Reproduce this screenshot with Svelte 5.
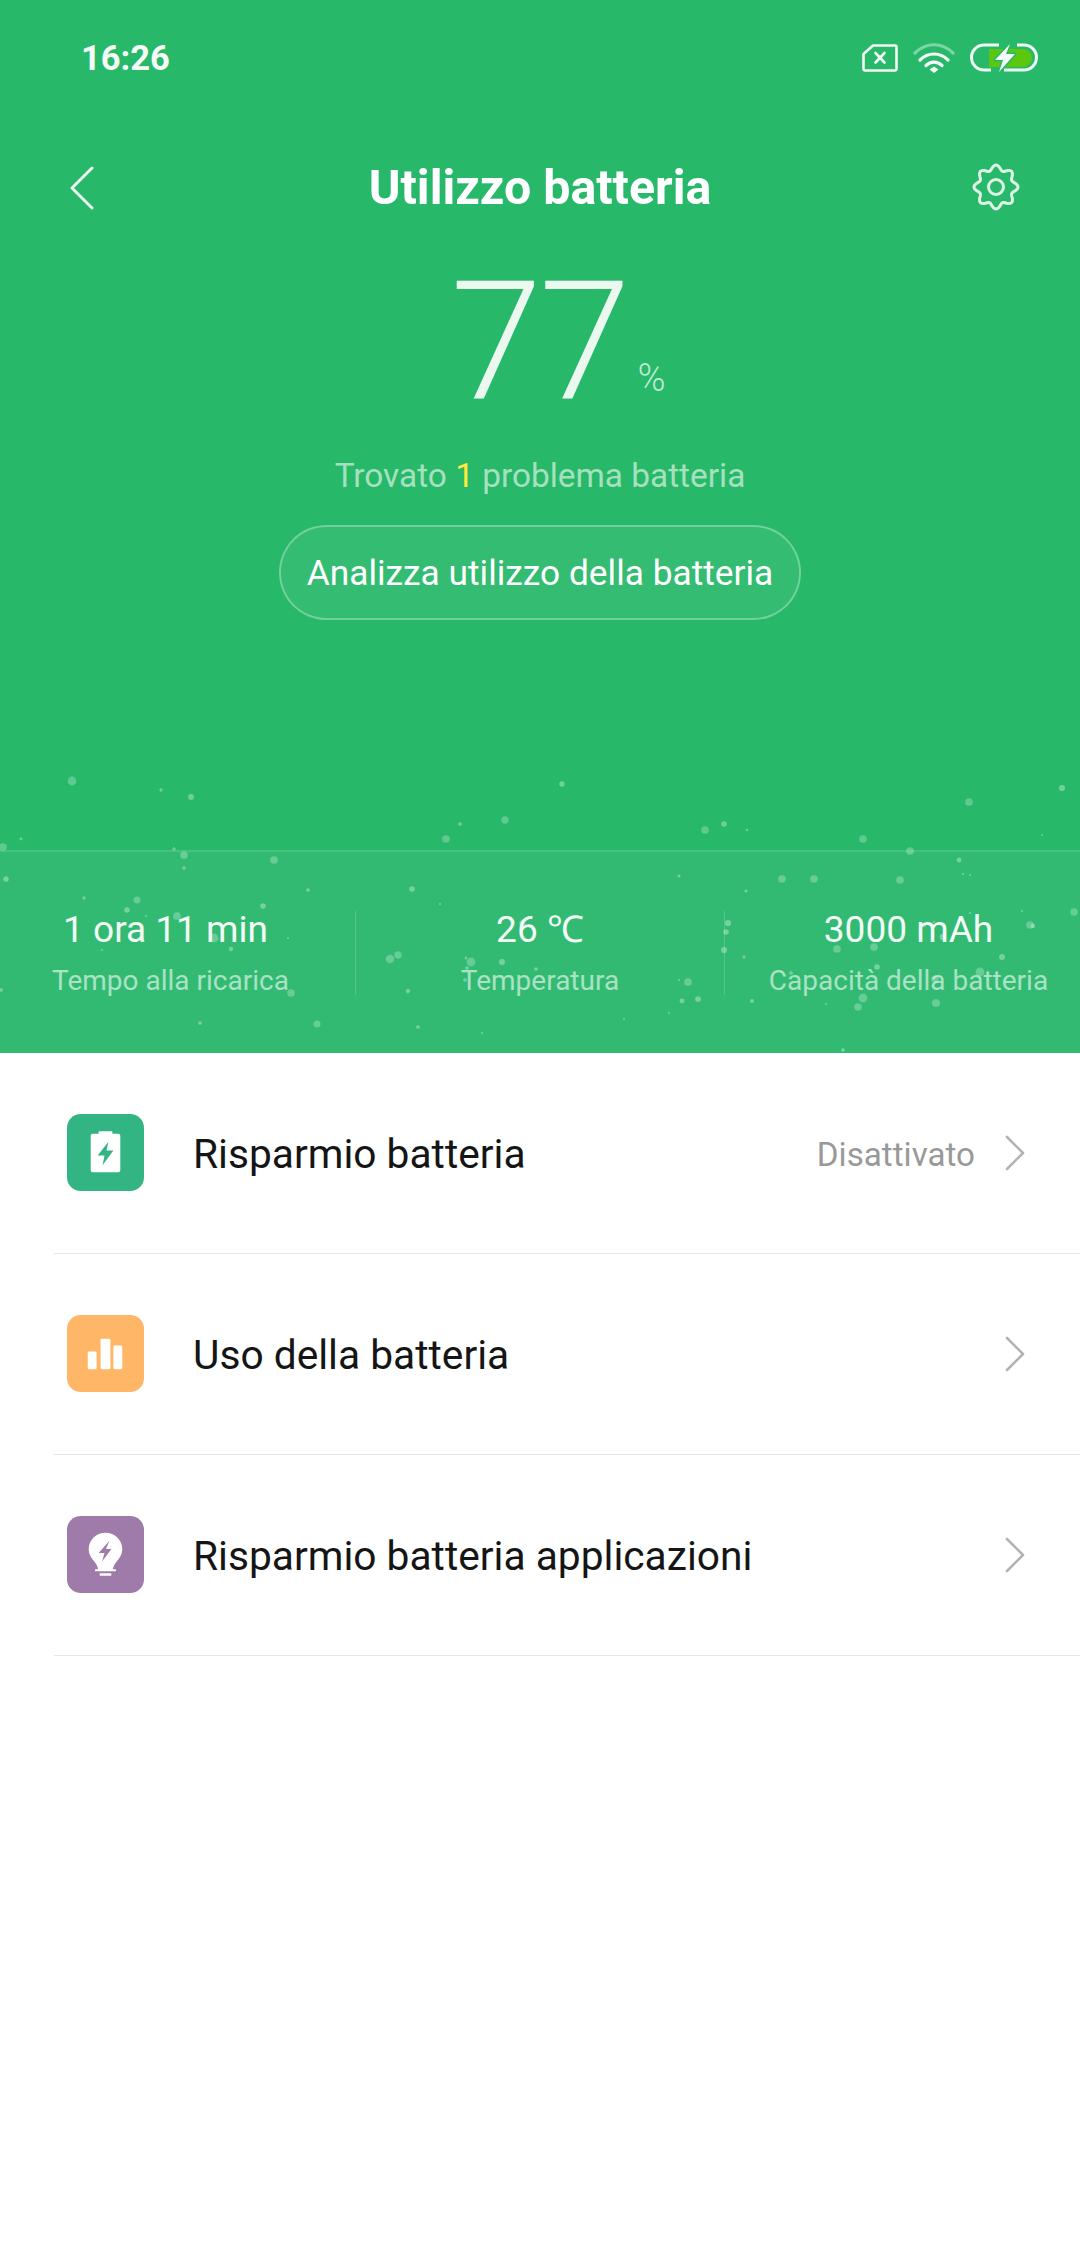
<script>
  // particles floating over the bottom of the green header: [x, y, r]
  const dots = [
    [72,781,4],[161,790,1.5],[191,797,2.7],[3,847,3.5],[21,839,1.3],[174,849,1.5],[184,855,3.5],[184,868,1.5],
    [274,860,3.5],[6,879,2.5],[84,898,1.5],[137,900,3.2],[127,910,2.5],[146,916,1],[177,916,3.5],[263,906,2.5],
    [308,890,1.7],[412,889,2.5],[440,904,1],[446,839,3.5],[460,824,1.7],[505,820,3.3],[214,938,4],[231,949,2],
    [288,938,1],[102,950,1],[390,959,3.8],[398,955,3.3],[471,962,4],[466,958,1.3],[502,962,2.7],[467,968,1.7],
    [536,969,1.7],[465,980,1.7],[1,990,1.7],[291,993,3.5],[408,991,2],[200,1023,1.7],[317,1024,3.2],[418,1027,1.7],
    [482,1033,1],[522,923,2.5],[562,784,2.5],[705,830,3.5],[724,824,2.5],[747,830,1.2],[863,839,3.5],[969,802,3.5],
    [1062,788,2.8],[1042,835,1],[910,851,3.5],[959,860,2.2],[963,874,1],[970,875,1],[679,876,1.4],[782,879,3.5],
    [814,879,3.5],[900,880,3.5],[746,891,1.4],[728,923,2.8],[726,932,2.5],[724,950,2.7],[744,957,1.4],[1074,912,3.4],
    [1030,925,3.5],[1033,926,2],[1022,911,1],[970,913,1],[934,922,1],[924,925,2],[943,937,3],[837,949,3.5],
    [874,947,3.5],[1002,957,2.7],[877,967,2.5],[980,972,4],[935,979,3.5],[791,973,1.7],[688,982,3.5],[679,980,1],
    [698,999,2.6],[682,1001,2.2],[752,1001,1.8],[863,998,4],[858,1007,3.4],[936,1003,3.7],[826,1004,1],[669,1013,1],
    [624,1019,1],[843,1050,1.7]
  ];

  const stats = [
    { value: "1 ora 11 min", label: "Tempo alla ricarica" },
    { value: "26 ℃", label: "Temperatura" },
    { value: "3000 mAh", label: "Capacità della batteria" }
  ];

  // wavy 8 lobe gear outline, centred on 24,24
  function gearPath() {
    const pts = [];
    for (let i = 0; i < 160; i++) {
      const a = (i / 160) * Math.PI * 2 - Math.PI / 2;
      const r = 19.5 + 2.5 * Math.cos(8 * (a + Math.PI / 2));
      pts.push((24 + r * Math.cos(a)).toFixed(2) + "," + (24 + r * Math.sin(a)).toFixed(2));
    }
    return "M" + pts.join("L") + "Z";
  }
</script>

<div class="page">
  <header class="hero">
    <div class="status">
      <span class="time">16:26</span>
      <div class="status-icons">
        <svg width="36" height="28" viewBox="0 0 36 28" fill="none" stroke="#f2fbf6" stroke-width="2.6" stroke-linejoin="round">
          <path d="M11 1.5H33a1.5 1.5 0 0 1 1.5 1.500V25a1.500 1.500 0 0 1-1.500 1.500H3A1.500 1.500 0 0 1 1.500 25V10Z" />
          <path d="M13.500 9l9 9.500M22.500 9l-9 9.500" stroke-linecap="round" />
        </svg>
        <svg width="42" height="30" viewBox="0 0 42 30" fill="none" stroke-linecap="round">
          <path d="M2 10C13-1 29-1 40 10" stroke="#fff" stroke-opacity=".4" stroke-width="3.200" />
          <path d="M7 17C15 9 27 9 35 17" stroke="#f6fcf9" stroke-width="3.200" />
          <path d="M13 22.500C17.500 18 24.500 18 29 22.500" stroke="#f6fcf9" stroke-width="3.200" />
          <path d="M16.500 26.500L21 23.500L25.500 26.500L21 30Z" fill="#f6fcf9" />
        </svg>
        <svg width="68" height="30" viewBox="0 0 68 30" fill="none">
          <path d="M19 6H53A9 9 0 0 1 53 24H19Z" fill="#5cc70f" />
          <path d="M29 2H14A12.500 12.500 0 0 0 14 27H21M47 2H54A12.500 12.500 0 0 1 54 27H34" stroke="#eef9f3" stroke-width="3" />
          <path d="M40 1L25 17H33L29 29L45 11H36Z" fill="#f3fbf6" stroke="#28b86a" stroke-width="3" paint-order="stroke" stroke-linejoin="round" />
        </svg>
      </div>
    </div>

    <div class="topbar">
      <svg class="back" width="24" height="44" viewBox="0 0 24 44" fill="none">
        <path d="M22 2L2 22L22 42" stroke="#e9f7ef" stroke-width="3" stroke-linecap="round" stroke-linejoin="round" />
      </svg>
      <h1>Utilizzo batteria</h1>
      <svg class="gear" width="48" height="48" viewBox="0 0 48 48" fill="none" stroke="#dcf3e6" stroke-width="3" stroke-linejoin="round">
        <path d={gearPath()} />
        <circle cx="24" cy="24" r="7.500" />
      </svg>
    </div>

    <div class="level"><span class="num">77</span><span class="pct">%</span></div>
    <p class="found">Trovato <b>1</b> problema batteria</p>
    <div class="analyze">Analizza utilizzo della batteria</div>

    <div class="stats">
      {#each stats as s}
        <div class="stat">
          <div class="value">{s.value}</div>
          <div class="label">{s.label}</div>
        </div>
      {/each}
    </div>

    <svg class="dots" width="1080" height="1053" viewBox="0 0 1080 1053">
      {#each dots as [x, y, r]}
        <circle cx={x} cy={y} r={r * 1.1} fill="#fff" fill-opacity={r > 3 ? 0.26 : 0.33} />
      {/each}
    </svg>
  </header>

  <section class="list">
    <div class="row">
      <svg class="tile" width="77" height="77" viewBox="0 0 78 78">
        <rect width="78" height="78" rx="14" fill="#33b583" />
        <path d="M33 17.500h12a1 1 0 0 1 1 1V20h6a2 2 0 0 1 2 2v35a2 2 0 0 1-2 2H26a2 2 0 0 1-2-2V22a2 2 0 0 1 2-2h6v-1.500a1 1 0 0 1 1-1Z" fill="#fff" />
        <path d="M42 28L31 42H38L36 52L47 37H40Z" fill="#33b583" />
      </svg>
      <span class="name">Risparmio batteria</span>
      <span class="state">Disattivato</span>
      <svg class="chev" width="20" height="36" viewBox="0 0 20 36" fill="none"><path d="M2 2L18 18L2 34" stroke="#b3b3b3" stroke-width="2.600" stroke-linecap="round" stroke-linejoin="round" /></svg>
    </div>
    <div class="row">
      <svg class="tile" width="77" height="77" viewBox="0 0 78 78">
        <rect width="78" height="78" rx="14" fill="#ffb666" />
        <rect x="21" y="37" width="9" height="18" rx="1.500" fill="#fff" />
        <rect x="34" y="24" width="10" height="31" rx="1.500" fill="#fff" />
        <rect x="47" y="31" width="9" height="24" rx="1.500" fill="#fff" />
      </svg>
      <span class="name">Uso della batteria</span>
      <svg class="chev" width="20" height="36" viewBox="0 0 20 36" fill="none"><path d="M2 2L18 18L2 34" stroke="#b3b3b3" stroke-width="2.600" stroke-linecap="round" stroke-linejoin="round" /></svg>
    </div>
    <div class="row">
      <svg class="tile" width="77" height="77" viewBox="0 0 78 78">
        <rect width="78" height="78" rx="14" fill="#9e7ba8" />
        <path d="M39 17C29.500 17 22 24.500 22 33.500C22 39.500 25 43 28 46.500C30 49 31 51 31.500 54H28.500V56H49.500V54H46.500C47 51 48 49 50 46.500C53 43 56 39.500 56 33.500C56 24.500 48.500 17 39 17Z" fill="#fff" />
        <path d="M43 25L32 37.500H38L35.500 46L45 33.500H39.500Z" fill="#9e7ba8" />
        <rect x="33" y="58" width="12" height="2.500" rx="1" fill="#fff" />
      </svg>
      <span class="name">Risparmio batteria applicazioni</span>
      <svg class="chev" width="20" height="36" viewBox="0 0 20 36" fill="none"><path d="M2 2L18 18L2 34" stroke="#b3b3b3" stroke-width="2.600" stroke-linecap="round" stroke-linejoin="round" /></svg>
    </div>
  </section>
</div>

<style>
  :global(body) {
    margin: 0;
    background: #fff;
  }

  .page {
    width: 1080px;
    height: 2248px;
    font-family: Roboto, "Liberation Sans", sans-serif;
    background: #fff;
    overflow: hidden;
  }

  .hero {
    position: relative;
    height: 1053px;
    background: #28b86a;
    color: #fff;
    display: flex;
    flex-direction: column;
    align-items: center;
  }

  .status {
    align-self: stretch;
    height: 30px;
    margin-top: 43px;
    padding: 0 42px 0 81px;
    display: flex;
    justify-content: space-between;
    align-items: center;
  }

  .time {
    font-size: 34.5px;
    font-weight: 700;
    color: #f4fbf7;
  }

  .status-icons {
    display: flex;
    align-items: center;
    gap: 15px;
  }

  .topbar {
    align-self: stretch;
    height: 50px;
    margin-top: 90px;
    padding: 0 60px;
    display: grid;
    grid-template-columns: 1fr auto 1fr;
    align-items: center;
  }

  .back {
    margin-left: 10px;
  }

  .gear {
    justify-self: end;
    margin-bottom: 2px;
  }

  h1 {
    margin: 0;
    font-size: 48.3px;
    font-weight: 700;
    line-height: 50px;
  }

  .level {
    margin-top: 34px;
    height: 190px;
    margin-left: 36px;
    line-height: 190px;
    white-space: nowrap;
  }

  .num {
    font-size: 165px;
    font-weight: 300;
    letter-spacing: -3px;
    color: #eaf8f0;
  }

  .pct {
    font-size: 38px;
    font-weight: 300;
    margin-left: 10px;
    vertical-align: 7px;
    color: #bde9d0;
  }

  .found {
    margin: 19px 0 0;
    font-size: 33.4px;
    line-height: 40px;
    color: #a5e0bf;
  }

  .found b {
    font-weight: 400;
    color: #ffe93c;
  }

  .analyze {
    box-sizing: border-box;
    margin-top: 29px;
    width: 522px;
    height: 95px;
    border: 2px solid rgba(255, 255, 255, 0.3);
    border-radius: 48px;
    background: rgba(255, 255, 255, 0.06);
    font-size: 35.3px;
    display: flex;
    align-items: center;
    justify-content: center;
  }

  .stats {
    align-self: stretch;
    box-sizing: border-box;
    margin-top: auto;
    height: 203px;
    border-top: 2px solid rgba(255, 255, 255, 0.1);
    background: #33ba72;
    display: grid;
    grid-template-columns: 355px 369px 356px;
    align-items: center;
  }

  .stat {
    height: 84px;
    display: flex;
    flex-direction: column;
    align-items: center;
    justify-content: center;
    border-left: 1px solid rgba(255, 255, 255, 0.16);
  }

  .stat:first-child {
    border-left: none;
    padding-right: 14px;
  }

  .stat:first-child .value {
    padding-right: 10px;
  }

  .stat:last-child {
    padding-left: 12px;
  }

  .value {
    font-size: 37px;
    line-height: 42px;
    padding-top: 1px;
    color: #f2fbf6;
    white-space: nowrap;
  }

  .label {
    margin-top: 13px;
    font-size: 28px;
    line-height: 34px;
    color: #a9e2c4;
    white-space: nowrap;
  }

  .dots {
    position: absolute;
    top: 0;
    left: 0;
    pointer-events: none;
  }

  .list {
    display: flex;
    flex-direction: column;
  }

  .row {
    box-sizing: border-box;
    height: 201px;
    margin-left: 54px;
    padding-right: 55px;
    padding-left: 13px;
    border-bottom: 1px solid #e6e6e6;
    display: flex;
    align-items: center;
  }

  .tile {
    flex: none;
    margin-right: 49px;
    margin-bottom: 2px;
  }

  .name {
    flex: 1;
    font-size: 40.7px;
    padding-top: 2px;
    color: #151515;
  }

  .state {
    font-size: 33.2px;
    padding-top: 2px;
    color: #999;
    margin-right: 30px;
  }
</style>
